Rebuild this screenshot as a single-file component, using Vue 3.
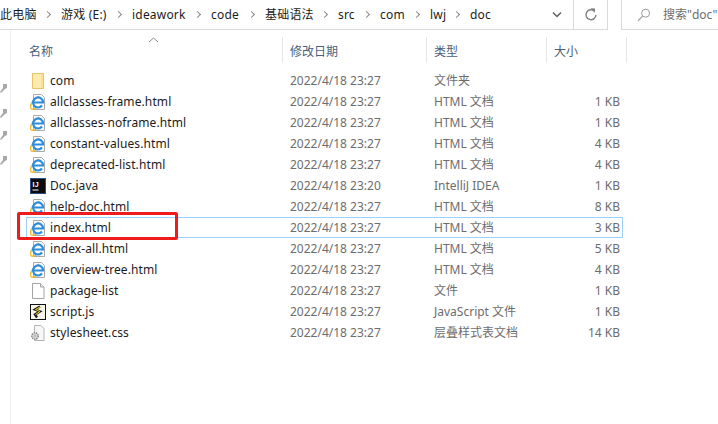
<script setup>
const crumbs = [
  { t: '此电脑', w: 49 }, { t: '游戏 (E:)', w: 59 }, { t: 'ideawork', w: 67 }, { t: 'code', w: 42 },
  { t: '基础语法', w: 61 }, { t: 'src', w: 30 }, { t: 'com', w: 38 }, { t: 'lwj', w: 28 }, { t: 'doc', w: 0 }
]
const d = '2022/4/18 23:27'
const h = 'HTML 文档'
const files = [
  { n: 'com', i: 'folder', d, t: '文件夹', s: '' },
  { n: 'allclasses-frame.html', i: 'ie', d, t: h, s: '1 KB' },
  { n: 'allclasses-noframe.html', i: 'ie', d, t: h, s: '1 KB' },
  { n: 'constant-values.html', i: 'ie', d, t: h, s: '4 KB' },
  { n: 'deprecated-list.html', i: 'ie', d, t: h, s: '4 KB' },
  { n: 'Doc.java', i: 'ij', d: '2022/4/18 23:20', t: 'IntelliJ IDEA', s: '1 KB' },
  { n: 'help-doc.html', i: 'ie', d, t: h, s: '8 KB' },
  { n: 'index.html', i: 'ie', d, t: h, s: '3 KB', sel: true },
  { n: 'index-all.html', i: 'ie', d, t: h, s: '5 KB' },
  { n: 'overview-tree.html', i: 'ie', d, t: h, s: '4 KB' },
  { n: 'package-list', i: 'page', d, t: '文件', s: '1 KB' },
  { n: 'script.js', i: 'js', d, t: 'JavaScript 文件', s: '1 KB' },
  { n: 'stylesheet.css', i: 'css', d, t: '层叠样式表文档', s: '14 KB' }
]
const pins = [0, 1, 2, 3]
</script>

<template>
  <div class="win">
    <header class="top">
      <div class="address">
        <div class="crumbs">
          <span v-for="c in crumbs" :key="c.t" class="crumb" :style="{ width: c.w ? c.w + 'px' : 'auto' }">{{ c.t }}</span>
        </div>
        <svg class="drop" width="10" height="7" viewBox="0 0 10 7"><path d="M1 1.500l4 4 4-4" fill="none" stroke="#5f5f5f" stroke-width="1.500"/></svg>
        <div class="refresh">
          <svg width="14" height="15" viewBox="0 0 14 15"><path d="M10.600 4.200A5 5 0 1 0 12 8" fill="none" stroke="#7d7d7d" stroke-width="1.400"/><path d="M6.600 1.200l4.400.4-.2 4.200z" fill="#7d7d7d"/></svg>
        </div>
      </div>
      <div class="search">
        <svg width="14" height="14" viewBox="0 0 14 14"><circle cx="8.600" cy="5.200" r="4" fill="none" stroke="#9a9a9a"/><path d="M5.600 8.200L1 12.800" stroke="#9a9a9a" stroke-width="1.100"/></svg>
        <span class="stext">搜索"doc"</span>
      </div>
    </header>

    <div class="body">
      <aside class="side">
        <svg v-for="p in pins" :key="p" class="pin" width="7" height="9" viewBox="0 0 7 9"><path d="M3 0h4v4L5 5 1 9 0 8l3-4z" fill="#a8a8a8"/></svg>
      </aside>
      <main class="main">
        <svg class="sort" width="11" height="6" viewBox="0 0 11 6"><path d="M1 5l4.500-4L10 5" fill="none" stroke="#8b8b8b"/></svg>
        <div class="head">
          <div class="hc first">名称</div>
          <div class="hc">修改日期</div>
          <div class="hc">类型</div>
          <div class="hc">大小</div>
        </div>
        <div class="list">
          <div v-for="f in files" :key="f.n" class="row" :class="{ sel: f.sel }">
            <div class="name">
              <svg v-if="f.i === 'folder'" class="ico" width="16" height="16" viewBox="0 0 16 16">
                <path d="M2.500 .5h11v15h-11z" fill="#fde08a" stroke="#e8c466"/><path d="M3 1h8v14H3z" fill="#fdeab0"/>
              </svg>
              <svg v-else-if="f.i === 'ie'" class="ico" width="16" height="16" viewBox="0 0 16 16">
                <path d="M3.500 .5h8l3 3v12h-11z" fill="#fbfbfb" stroke="#a9a9a9"/>
                <path d="M.8 14.500C-.4 11 3 5 9 2.500" fill="none" stroke="#f2bd30" stroke-width="1.600"/>
                <path d="M.8 14.500c1.200 1.200 3.400.6 5.200-.6" fill="none" stroke="#f2bd30" stroke-width="1.400"/>
                <path d="M3.500 8.500H13A5 5 0 1 0 12 11.500" fill="none" stroke="#2a8ede" stroke-width="2.200"/>
              </svg>
              <svg v-else-if="f.i === 'ij'" class="ico" width="16" height="16" viewBox="0 0 16 16">
                <rect width="15" height="15" x=".5" y=".5" fill="#0c0c10" stroke="#2e4f86"/>
                <text x="2.600" y="9" class="ijt">IJ</text>
                <path d="M2.500 12h6" stroke="#fff"/>
              </svg>
              <svg v-else-if="f.i === 'page'" class="ico" width="16" height="16" viewBox="0 0 16 16">
                <path d="M2.500 .5h8l3.500 3.500v11.500h-11.500z" fill="#fff" stroke="#a4a4a4"/><path d="M10.500 .5v3.500h3.500" fill="#eee" stroke="#a4a4a4"/>
              </svg>
              <svg v-else-if="f.i === 'js'" class="ico" width="16" height="16" viewBox="0 0 16 16">
                <rect width="15" height="15" x=".5" y=".5" fill="#f4f4ea" stroke="#111"/>
                <path d="M10 2.500L5 5.500l5 2-5 3 2 3" fill="none" stroke="#1c1c1c" stroke-width="2.400"/>
                <path d="M10 3L5.500 5.500l4.500 2-4.500 3" fill="none" stroke="#f0d21f" stroke-width="1"/>
              </svg>
              <svg v-else class="ico" width="16" height="16" viewBox="0 0 16 16">
                <path d="M4.500 .5h6.500l3 3v12h-9.500z" fill="#f8f8f8" stroke="#b4b4b4"/>
                <circle cx="5" cy="11" r="3.200" fill="#e6e6e6" stroke="#8d8d8d" stroke-dasharray="1.500 .7" stroke-width="1.600"/>
                <circle cx="5" cy="11" r="1.100" fill="#fff" stroke="#8d8d8d" stroke-width=".7"/>
              </svg>
              <span>{{ f.n }}</span>
            </div>
            <div class="cell">{{ f.d }}</div>
            <div class="cell">{{ f.t }}</div>
            <div class="cell size">{{ f.s }}</div>
          </div>
          <div class="mark"></div>
        </div>
      </main>
    </div>
  </div>
</template>

<style scoped>
.win {
  width: 718px;
  height: 424px;
  overflow: hidden;
  background: #fff;
  font: 12px/21px "Noto Sans", "Noto Sans CJK SC", sans-serif;
  color: #1c1c1c;
}
.top {
  display: flex;
  height: 30px;
  gap: 13px;
}
.address {
  width: 608px;
  box-sizing: border-box;
  display: flex;
  align-items: center;
  border-bottom: 1px solid #d9d9d9;
  border-right: 1px solid #d9d9d9;
}
.crumbs {
  flex: 1;
  display: flex;
  align-items: center;
  height: 28px;
}
.crumb {
  display: block;
  position: relative;
  white-space: nowrap;
  letter-spacing: .2px;
  flex: none;
  margin-right: 12px;
}
.crumb:not(:last-child)::after {
  content: "";
  position: absolute;
  right: -1px;
  top: 8px;
  width: 4px;
  height: 4px;
  border-top: 1.500px solid #8b8b8b;
  border-right: 1.500px solid #8b8b8b;
  transform: rotate(45deg);
}
.drop {
  margin-right: 11px;
}
.refresh {
  width: 33px;
  height: 29px;
  border-left: 1px solid #d9d9d9;
  display: flex;
  align-items: center;
  justify-content: center;
}
.search {
  flex: 1;
  box-sizing: border-box;
  display: flex;
  align-items: center;
  gap: 12px;
  padding-left: 15px;
  border-left: 1px solid #d9d9d9;
  border-bottom: 1px solid #d9d9d9;
  color: #6d6d6d;
}
.stext {
  white-space: nowrap;
}
.body {
  display: flex;
  height: 394px;
}
.side {
  width: 10px;
  border-right: 1px solid #f0f0f0;
  display: flex;
  flex-direction: column;
  align-items: flex-start;
  padding-top: 54px;
  gap: 13px;
}
.pin {
  flex: none;
}
.pin:nth-child(even) {
  margin-top: 3px;
}
.main {
  flex: 1;
  position: relative;
  padding-left: 15px;
}
.sort {
  position: absolute;
  left: 137px;
  top: 7px;
}
.head {
  display: grid;
  grid-template-columns: 257px 144px 120px 80px;
  padding-top: 7px;
  height: 26px;
  margin-bottom: 7px;
}
.hc {
  height: 26px;
  line-height: 29px;
  padding-left: 7px;
  border-right: 1px solid #e5e5e5;
  color: #4c607a;
  box-sizing: border-box;
}
.hc.first {
  padding-left: 3px;
}
.list {
  position: relative;
  width: 597px;
}
.row {
  display: grid;
  grid-template-columns: 257px 144px 120px 76px;
  height: 21px;
  box-sizing: border-box;
  line-height: 21px;
}
.row.sel {
  outline: 1px solid #99d1ff;
  outline-offset: -1px;
}
.name {
  display: flex;
  align-items: center;
  gap: 4px;
  padding-left: 4px;
  letter-spacing: .1px;
}
.ico {
  flex: none;
}
.ijt {
  font: 700 7px "Liberation Sans", sans-serif;
  fill: #fff;
}
.cell {
  padding-left: 7px;
  color: #6d6d6d;
  white-space: nowrap;
}
.size {
  text-align: right;
  padding-right: 3px;
}
.mark {
  position: absolute;
  left: -9px;
  top: 142px;
  width: 161px;
  height: 28px;
  border: 3px solid #ee1c1c;
  border-radius: 2px;
  box-sizing: border-box;
}
</style>
